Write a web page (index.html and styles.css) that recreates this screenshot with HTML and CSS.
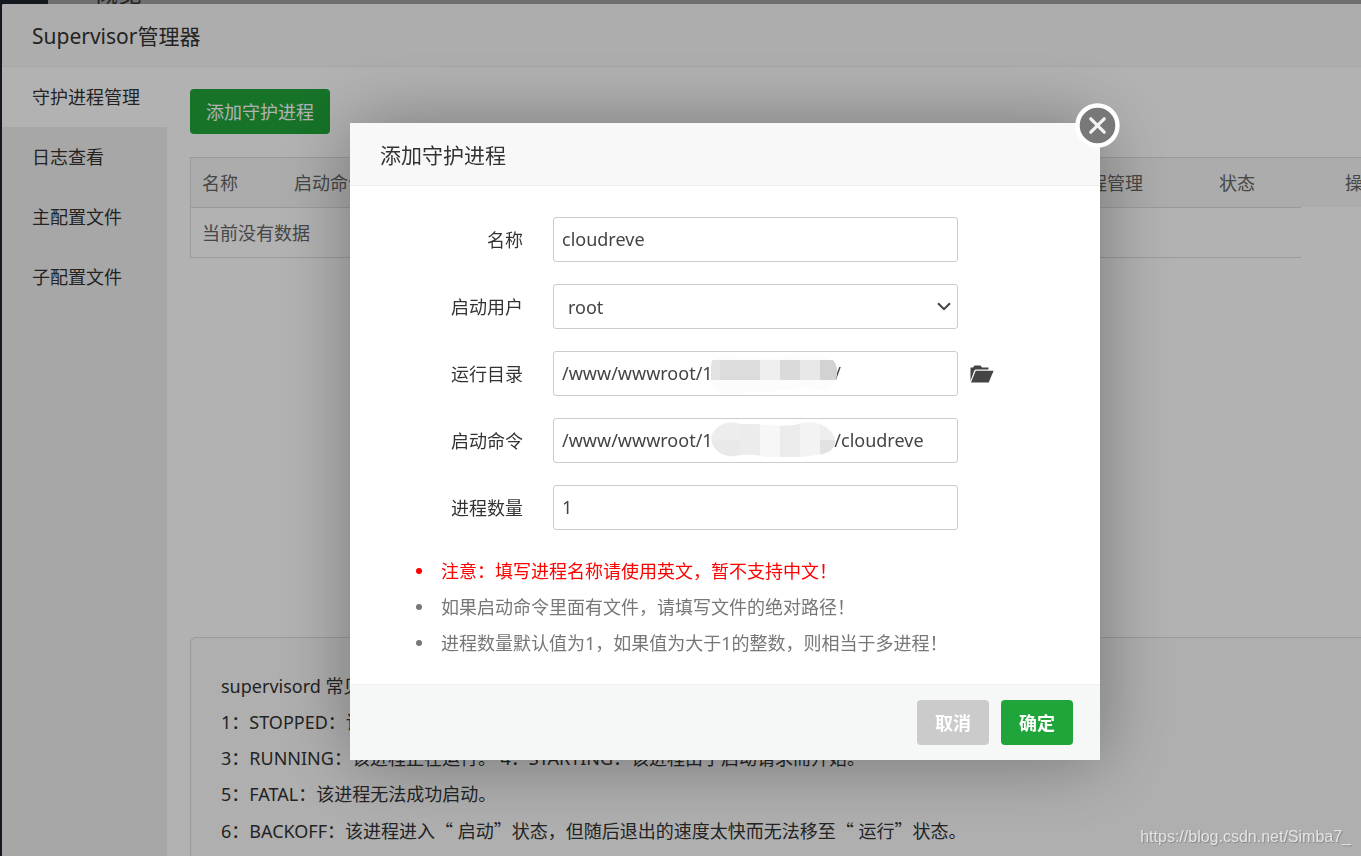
FILE: index.html
```html
<!DOCTYPE html>
<html lang="zh-CN">
<head>
<meta charset="utf-8">
<title>Supervisor管理器</title>
<link rel="stylesheet" href="styles.css">
</head>
<body>
<div class="page-strip">
  <div class="page-nav"></div>
  <div class="page-main"><span class="page-title">概览</span></div>
</div>

<section class="manager">
  <h1 class="window-title">Supervisor管理器</h1>
  <div class="manager-body">
    <nav class="sidebar">
      <a class="side-link active" href="#daemon">守护进程管理</a>
      <a class="side-link" href="#log">日志查看</a>
      <a class="side-link" href="#main-conf">主配置文件</a>
      <a class="side-link" href="#sub-conf">子配置文件</a>
    </nav>
    <main class="content">
      <button class="btn-add" type="button">添加守护进程</button>
      <div class="process-list">
        <table class="list-head">
          <thead>
            <tr>
              <th class="col-name">名称</th>
              <th class="col-command">启动命令</th>
              <th class="col-process">进程管理</th>
              <th class="col-state">状态</th>
              <th class="col-action">操作</th>
            </tr>
          </thead>
        </table>
        <table class="list-body">
          <tbody>
            <tr><td>当前没有数据</td></tr>
          </tbody>
        </table>
      </div>
      <div class="states">
        <p>supervisord 常见状态</p>
        <p>1：STOPPED：该进程已停止。</p>
        <p>3：RUNNING：该进程正在运行。 4：STARTING：该进程由于启动请求而开始。</p>
        <p>5：FATAL：该进程无法成功启动。</p>
        <p>6：BACKOFF：该进程进入<span class="quote">“</span> 启动<span class="quote">”</span>状态，但随后退出的速度太快而无法移至<span class="quote">“</span> 运行<span class="quote">”</span>状态。</p>
      </div>
    </main>
  </div>
</section>

<div class="overlay">
  <form class="dialog" role="dialog" aria-labelledby="dialog-title">
    <h2 class="window-title" id="dialog-title">添加守护进程</h2>
    <button class="close" type="button" aria-label="关闭">
      <svg viewBox="0 0 45 45" width="45" height="45" aria-hidden="true">
        <circle cx="22.5" cy="22.5" r="20" fill="#787878" stroke="#fff" stroke-width="4.4"/>
        <path d="M15.8 15.8 29.2 29.2M29.2 15.8 15.8 29.2" stroke="#f4f4f4" stroke-width="3.2" stroke-linecap="round"/>
      </svg>
    </button>
    <div class="fields">
      <div class="row">
        <label for="name">名称</label>
        <div class="control"><input id="name" type="text" value="cloudreve"></div>
      </div>
      <div class="row">
        <label for="user">启动用户</label>
        <div class="control">
          <select id="user"><option>root</option></select>
          <svg class="arrow" viewBox="0 0 14 9" width="14" height="9" aria-hidden="true"><path d="M1 1.2 7 7.2 13 1.2" fill="none" stroke="#444" stroke-width="2"/></svg>
        </div>
      </div>
      <div class="row">
        <label for="dir">运行目录</label>
        <div class="control">
          <input id="dir" type="text" value="/www/wwwroot/1                          /">
          <svg class="mask" viewBox="0 0 132 43" width="132" height="43" aria-hidden="true">
            <path d="M6 20C6 8 13 4 24 4Q34 4 40 8Q69 8 86 4H112Q130 6 131 22Q130 36 120 39Q112 41 102 36L64 41H40Q30 44 18 43Q6 40 5 28Z" fill="#fcfcfc"/>
            <path d="M6 9H15V29H5V18Q5 13 6 9Z" fill="#e3e3e3"/>
            <path d="M14 9H54V29H14Z" fill="#dcdcdc"/>
            <path d="M54 9H74V29H54Z" fill="#efefef"/>
            <path d="M74 9H94V29H74Z" fill="#dadada"/>
            <path d="M94 9H114V29H94Z" fill="#e8e8e8"/>
            <path d="M114 9H127Q131 14 131 20L130 29H114Z" fill="#d2d2d2"/>
          </svg>
        </div>
        <button class="browse" type="button" aria-label="选择目录">
          <svg viewBox="0 0 24 18" width="24" height="18" aria-hidden="true">
            <path d="M0.5 16V2.5H3L4.5 .5H10.5L12 2.5H18.5V4.5H5.5L4.3 5.4Z" fill="#444"/>
            <path d="M5.7 5.8H23.6L18.7 17.5H1Z" fill="#444"/>
          </svg>
        </button>
      </div>
      <div class="row">
        <label for="command">启动命令</label>
        <div class="control">
          <input id="command" type="text" value="/www/wwwroot/1                          /cloudreve">
          <svg class="mask" viewBox="0 0 132 43" width="132" height="43" aria-hidden="true">
            <clipPath id="blob"><path d="M5 20Q8 8 20 5Q27 3 34 6H52Q70 9 89 7Q98 3 110 5Q124 8 129 20Q130 33 117 36Q104 38 95 39H58Q52 36 34 37Q22 40 14 35Q6 30 5 20Z"/></clipPath>
            <g clip-path="url(#blob)">
              <path d="M0 0H34V22H0Z" fill="#ededed"/>
              <path d="M0 22H34V43H0Z" fill="#e9e9e9"/>
              <path d="M34 0H54V43H34Z" fill="#ececec"/>
              <path d="M54 0H74V43H54Z" fill="#f7f7f7"/>
              <path d="M74 0H94V43H74Z" fill="#ebebeb"/>
              <path d="M94 0H114V43H94Z" fill="#f3f3f3"/>
              <path d="M114 0H132V22H114Z" fill="#eeeeee"/>
              <path d="M114 22H132V43H114Z" fill="#e2e2e2"/>
            </g>
          </svg>
        </div>
      </div>
      <div class="row">
        <label for="count">进程数量</label>
        <div class="control"><input id="count" type="text" value="1"></div>
      </div>
    </div>
    <ul class="help">
      <li class="warn">注意：填写进程名称请使用英文，暂不支持中文！</li>
      <li>如果启动命令里面有文件，请填写文件的绝对路径！</li>
      <li>进程数量默认值为1，如果值为大于1的整数，则相当于多进程！</li>
    </ul>
    <div class="actions">
      <button class="btn cancel" type="button">取消</button>
      <button class="btn confirm" type="submit">确定</button>
    </div>
  </form>
</div>
<div class="watermark">https://blog.csdn.net/Simba7_</div>
</body>
</html>
```

FILE: styles.css
```css
* {
  box-sizing: border-box;
}

body {
  margin: 0;
  height: 100vh;
  overflow: hidden;
  background: #1f252d;
  color: #333;
  font: 18px/36px "Noto Sans", "Noto Sans CJK SC", sans-serif;
}

h1, h2, p, ul {
  margin: 0;
  padding: 0;
}

button, input, select {
  font: inherit;
  color: inherit;
}

button {
  border: 0;
  padding: 0;
  cursor: pointer;
}

.page-strip {
  display: flex;
  height: 4px;
  overflow: hidden;
}

.page-nav {
  width: 48px;
}

.page-main {
  display: flex;
  flex: 1;
  align-items: flex-end;
  padding-left: 46px;
  background: #a0a0a0;
}

.page-title {
  font-size: 24px;
  line-height: 22px;
}

.manager {
  display: flex;
  flex-direction: column;
  height: calc(100vh - 4px);
  margin-left: 2px;
  background: #fff;
  border-radius: 2px 0 0 0;
  overflow: hidden;
}

.window-title {
  flex: none;
  height: 63px;
  padding-left: 30px;
  border-bottom: 1px solid #eee;
  background: #f8f8f8;
  font-size: 21px;
  font-weight: 400;
  line-height: 64px;
}

.manager-body {
  display: flex;
  flex: 1;
  min-height: 0;
}

.sidebar {
  flex: none;
  width: 165px;
  background: #f0f0f0;
}

.side-link {
  display: block;
  padding-left: 30px;
  line-height: 60px;
  color: #333;
  text-decoration: none;
}

.side-link.active {
  background: #fff;
}

.content {
  flex: 1;
  min-width: 0;
  padding: 22px 0 0 23px;
}

.btn-add {
  display: block;
  height: 45px;
  padding: 0 16px;
  border-radius: 4px;
  background: #20a53a;
  color: #fff;
}

.process-list {
  height: 480px;
  margin-top: 23px;
  overflow: hidden;
  color: #666;
}

.list-head,
.list-body {
  border-collapse: separate;
  border-spacing: 0;
  border-left: 1px solid #ddd;
  table-layout: fixed;
}

.list-head {
  width: 1300px;
  border-top: 1px solid #ddd;
  background: #f6f6f6;
}

.list-body {
  width: calc(100% - 60px);
  border-top: 1px solid #ddd;
  border-bottom: 1px solid #ddd;
}

.list-head th,
.list-body td {
  height: 49px;
  padding: 0 11px;
  font-weight: 400;
  text-align: left;
}

.col-name {
  width: 92px;
}

.col-command {
  width: 777px;
}

.col-process {
  width: 148px;
}

.col-state {
  width: 126px;
}

.states {
  min-height: 220px;
  padding: 30px 30px;
  border: 1px solid #ddd;
  border-right: 0;
  border-radius: 6px 0 0 6px;
  background: #fbfbfb;
}

.quote {
  font-family: "Noto Sans CJK SC", sans-serif;
}

.overlay {
  position: fixed;
  inset: 0;
  padding: 123px 0 0 350px;
  background: rgba(0, 0, 0, 0.3);
}

.dialog {
  position: relative;
  width: 750px;
  border-radius: 2px 2px 0 0;
  background: #fff;
  box-shadow: 1px 1px 75px rgba(0, 0, 0, 0.34);
}

.close {
  position: absolute;
  top: -20px;
  right: -20px;
  width: 45px;
  height: 45px;
  border-radius: 50%;
  background: none;
}

.close svg,
.browse svg {
  display: block;
}

.fields {
  display: flex;
  flex-direction: column;
  gap: 22px;
  padding: 31px 0 23px;
}

.row {
  display: flex;
  align-items: center;
}

.row label {
  width: 173px;
  margin-right: 30px;
  text-align: right;
}

.control {
  position: relative;
  width: 405px;
  height: 45px;
}

.control input,
.control select {
  display: block;
  width: 100%;
  height: 45px;
  padding: 0 8px 2px;
  border: 1px solid #ccc;
  border-radius: 3px;
  background: #fff;
  color: #444;
  outline: 0;
}

.control select {
  appearance: none;
  padding: 0 14px;
}

.arrow {
  position: absolute;
  top: 18px;
  right: 7px;
  pointer-events: none;
}

.mask {
  position: absolute;
  top: 0;
  left: 153px;
}

.browse {
  margin-left: 12px;
  background: none;
}

.help {
  padding: 0 0 23px 66px;
  color: #777;
  list-style: none;
}

.help li {
  display: flex;
  align-items: center;
  gap: 19px;
}

.help li::before {
  content: "";
  width: 6px;
  height: 6px;
  border-radius: 50%;
  background: currentColor;
}

.help .warn {
  color: #f00;
}

.actions {
  display: flex;
  justify-content: flex-end;
  gap: 12px;
  padding: 15px 27px 15px 0;
  border-top: 1px solid #edf1f2;
  background: #f6f8f8;
}

.btn {
  width: 72px;
  height: 45px;
  border-radius: 4px;
  background: #cbcbcb;
  color: #fff;
  font-weight: 700;
}

.confirm {
  background: #20a53a;
}

.watermark {
  position: fixed;
  right: 10px;
  bottom: 8px;
  color: #e4e4e4;
  font: 16px/22px "Liberation Sans", sans-serif;
  text-shadow: 1px 1px 1px #888;
}
```
